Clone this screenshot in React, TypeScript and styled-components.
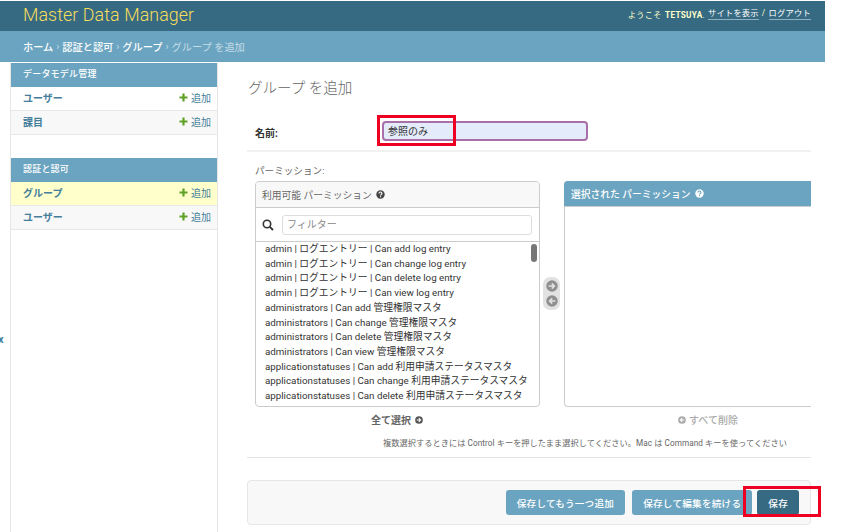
import React from "react";
import styled, { createGlobalStyle } from "styled-components";

const Global = createGlobalStyle`
  html, body { margin: 0; padding: 0; background: #fff; overflow: hidden; }
  body { width: 845px; height: 532px; font-family: Roboto, "Noto Sans CJK JP", "Liberation Sans", sans-serif; color: #333; font-size: 10px; }
  * { box-sizing: border-box; }
`;

const Page = styled.div`
  position: relative;
  width: 845px;
  height: 532px;
  padding-top: 1px;
  overflow: hidden;
`;
const Header = styled.header`
  width: 825px;
  height: 30px;
  background: #366a82;
  display: flex;
  align-items: center;
  justify-content: space-between;
  padding: 0 14px 0 23px;
`;
const Brand = styled.div`
  color: #f5dd5d;
  font-size: 17.8px;
  font-weight: 300;
  letter-spacing: 0.1px;
  margin-top: -4px;
`;
const UserTools = styled.div`
  color: #ffc;
  font-size: 8.2px;
  letter-spacing: 0.3px;
  margin-top: -4px;
  display: flex;
  gap: 3px;
  strong { font-weight: 700; margin-left: 1px; }
`;
const ToolLink = styled.span`
  color: #fff;
  border-bottom: 1px solid #8fb0bf;
  line-height: 11px;
`;
const Breadcrumbs = styled.nav`
  width: 825px;
  height: 31px;
  background: #6ba4c0;
  color: #c4dce8;
  font-size: 10.2px;
  padding: 0 23px 1px;
  display: flex;
  align-items: center;
  gap: 3px;
`;
const Crumb = styled.span`
  color: #fff;
  font-weight: 500;
`;
const Main = styled.div`
  display: flex;
  padding-left: 10px;
  margin-top: 1px;
`;
const Sidebar = styled.aside`
  width: 208px;
  height: 470px;
  flex: none;
  border-left: 1px solid #e6e6e6;
  border-right: 1px solid #e6e6e6;
`;
const ModuleGroup = styled.section`
  margin-bottom: 23px;
`;
const ModuleTitle = styled.div`
  height: 24px;
  background: #6ba4c0;
  color: #fff;
  font-size: 9px;
  font-weight: 500;
  padding: 0 0 3px 12px;
  display: flex;
  align-items: center;
  letter-spacing: 0.2px;
`;
const ModuleRow = styled.div<{ $bg?: string }>`
  height: 24px;
  background: ${(p) => p.$bg || "#fff"};
  border-bottom: 1px solid #e8e8e8;
  color: #447e9b;
  font-size: 10px;
  font-weight: 700;
  padding: 0 6px 2px 12px;
  display: flex;
  align-items: center;
  justify-content: space-between;
`;
const AddLink = styled.span`
  display: flex;
  align-items: center;
  gap: 3px;
  font-weight: 400;
  font-size: 10px;
`;
const Content = styled.main`
  flex: 1;
  padding: 16px 14px 0 29px;
`;
const Title = styled.h1`
  margin: 0 0 0 1px;
  height: 28px;
  font-size: 14.5px;
  line-height: 20px;
  font-weight: 300;
  color: #666;
`;
const NameRow = styled.div`
  margin-top: 7px;
  height: 38px;
  width: 564px;
  display: flex;
  align-items: flex-start;
  padding: 7px 0 0 8px;
  border-bottom: 2px solid #f1f1f1;
`;
const NameLabel = styled.label`
  width: 127px;
  font-size: 10px;
  font-weight: 700;
  color: #333;
  padding-top: 4px;
`;
const NameInput = styled.div`
  width: 206px;
  height: 20px;
  background: #e4ebfb;
  border: 2px solid #a86fa9;
  border-radius: 4px;
  font-size: 10px;
  display: flex;
  align-items: center;
  padding: 0 0 1px 4px;
  color: #333;
`;
const PermLabel = styled.div`
  margin: 11px 0 0 8px;
  height: 18px;
  font-size: 9.6px;
  color: #666;
`;
const Selector = styled.div`
  margin-left: 8px;
  width: 556px;
  display: flex;
  overflow: hidden;
`;
const Available = styled.div`
  width: 285px;
  height: 226px;
  flex: none;
  border: 1px solid #ccc;
  border-radius: 4px;
  overflow: hidden;
  display: flex;
  flex-direction: column;
`;
const AvailableTitle = styled.div`
  height: 26px;
  flex: none;
  background: #f8f8f8;
  border-bottom: 1px solid #ccc;
  color: #666;
  font-size: 9.75px;
  display: flex;
  align-items: center;
  gap: 4px;
  padding-left: 6px;
`;
const FilterRow = styled.div`
  height: 34px;
  flex: none;
  border-bottom: 1px solid #ccc;
  display: flex;
  align-items: center;
  padding: 0 7px 0 6px;
  gap: 8px;
`;
const FilterInput = styled.div`
  flex: 1;
  height: 20px;
  border: 1px solid #ddd;
  border-radius: 3px;
  color: #888;
  font-size: 10px;
  line-height: 17px;
  padding-left: 4px;
`;
const PermList = styled.div`
  position: relative;
  flex: 1;
  padding: 0 0 0 9px;
  overflow: hidden;
`;
const PermItem = styled.div`
  height: 14.72px;
  line-height: 14.72px;
  font-size: 9.75px;
  color: #333;
  white-space: nowrap;
`;
const ScrollThumb = styled.div`
  position: absolute;
  top: 2px;
  right: 2px;
  width: 6px;
  height: 18px;
  border-radius: 3px;
  background: #777;
`;
const ChooserColumn = styled.div`
  width: 24px;
  flex: none;
  padding: 96px 0 0 3px;
`;
const Chooser = styled.div`
  width: 17px;
  height: 33px;
  border-radius: 7px;
  background: #e2e2e2;
  display: flex;
  flex-direction: column;
  align-items: center;
  justify-content: space-evenly;
`;
const Chosen = styled.div`
  width: 260px;
  height: 226px;
  flex: none;
  border: 1px solid #ccc;
  border-right: none;
  border-radius: 4px 0 0 4px;
`;
const ChosenTitle = styled.div`
  height: 26px;
  margin: -1px -1px 0;
  background: #6ba4c0;
  color: #fff;
  border-radius: 4px 0 0 0;
  font-size: 9.75px;
  font-weight: 500;
  display: flex;
  align-items: center;
  gap: 5px;
  padding-left: 7px;
  border-bottom: 1px solid #ccc;
`;
const SelectActions = styled.div`
  margin-left: 8px;
  height: 25px;
  display: flex;
  align-items: center;
  font-size: 10px;
`;
const ChooseAll = styled.span`
  margin-left: 116px;
  width: 307px;
  font-weight: 700;
  color: #666;
  display: flex;
  align-items: center;
  gap: 4px;
`;
const RemoveAll = styled.span`
  color: #aaa;
  font-weight: 500;
  display: flex;
  align-items: center;
  gap: 3px;
`;
const HelpText = styled.div`
  width: 564px;
  height: 26px;
  padding: 4px 0 0 136px;
  font-size: 8.2px;
  color: #666;
  letter-spacing: 0.06px;
  border-bottom: 1px solid #e4e4e4;
`;
const SubmitRow = styled.div`
  margin-top: 22px;
  width: 564px;
  height: 45px;
  background: #f8f8f8;
  border: 1px solid #e6e6e6;
  border-radius: 4px;
  display: flex;
  align-items: center;
  justify-content: flex-end;
  padding: 0 11px 0 0;
`;
const SaveButton = styled.div<{ $primary?: boolean; $gap?: number }>`
  height: 25px;
  padding: 0 11px;
  background: ${(p) => (p.$primary ? "#366a82" : "#6ba4c0")};
  color: #fff;
  border-radius: 3px;
  font-size: 9.6px;
  font-weight: 500;
  display: flex;
  align-items: center;
  margin-left: ${(p) => p.$gap ?? 7}px;
  letter-spacing: 0.25px;
`;
const Toggle = styled.span`
  position: absolute;
  left: -2px;
  top: 333px;
  color: #447e9b;
  font-size: 11px;
  font-weight: 700;
`;
const Annotation = styled.div<{ $l: number; $t: number; $w: number; $h: number }>`
  position: absolute;
  left: ${(p) => p.$l}px;
  top: ${(p) => p.$t}px;
  width: ${(p) => p.$w}px;
  height: ${(p) => p.$h}px;
  border: 3px solid #ee0022;
`;

const Plus = () => (
  <svg width="9" height="9" viewBox="0 0 9 9"><path d="M3.4 0.5h2.2v2.9h2.9v2.2H5.6v2.9H3.4V5.6H.5V3.4h2.9z" fill="#5fa225" /></svg>
);
const Help = ({ fg, bg }: { fg: string; bg: string }) => (
  <svg width="9" height="9" viewBox="0 0 9 9">
    <circle cx="4.5" cy="4.5" r="4.2" fill={bg} />
    <path d="M3 3.5c0-2 3-2 3 0 0 1-1.5 1-1.5 2" fill="none" stroke={fg} strokeWidth="1.1" />
    <rect x="4" y="6.2" width="1.1" height="1.1" fill={fg} />
  </svg>
);
const Arrow = ({ dir, size, bg, fg }: { dir: "l" | "r"; size: number; bg: string; fg: string }) => (
  <svg width={size} height={size} viewBox="0 0 10 10">
    <circle cx="5" cy="5" r="4.8" fill={bg} />
    <path
      d={dir === "r" ? "M2.2 5h4.4M4.8 2.8L7 5 4.8 7.2" : "M7.8 5H3.4M5.2 2.8L3 5l2.2 2.2"}
      fill="none"
      stroke={fg}
      strokeWidth="1.3"
    />
  </svg>
);
const Search = () => (
  <svg width="12" height="12" viewBox="0 0 12 12">
    <circle cx="5" cy="5" r="3.7" fill="none" stroke="#333" strokeWidth="1.6" />
    <path d="M7.8 7.8l3.2 3.2" stroke="#333" strokeWidth="1.9" />
  </svg>
);

const perms = [
  "admin | ログエントリー | Can add log entry",
  "admin | ログエントリー | Can change log entry",
  "admin | ログエントリー | Can delete log entry",
  "admin | ログエントリー | Can view log entry",
  "administrators | Can add 管理権限マスタ",
  "administrators | Can change 管理権限マスタ",
  "administrators | Can delete 管理権限マスタ",
  "administrators | Can view 管理権限マスタ",
  "applicationstatuses | Can add 利用申請ステータスマスタ",
  "applicationstatuses | Can change 利用申請ステータスマスタ",
  "applicationstatuses | Can delete 利用申請ステータスマスタ",
];

const Row = ({ name, bg }: { name: string; bg?: string }) => (
  <ModuleRow $bg={bg}>
    <span>{name}</span>
    <AddLink><Plus />追加</AddLink>
  </ModuleRow>
);

export default function App() {
  return (
    <Page>
      <Global />
      <Header>
        <Brand>Master Data Manager</Brand>
        <UserTools>
          <span>ようこそ <strong>TETSUYA</strong>.</span>
          <ToolLink>サイトを表示</ToolLink>
          <span>/</span>
          <ToolLink>ログアウト</ToolLink>
        </UserTools>
      </Header>
      <Breadcrumbs>
        <Crumb>ホーム</Crumb>›<Crumb>認証と認可</Crumb>›<Crumb>グループ</Crumb>›<span>グループ を追加</span>
      </Breadcrumbs>
      <Main>
        <Sidebar>
          <ModuleGroup>
            <ModuleTitle>データモデル管理</ModuleTitle>
            <Row name="ユーザー" />
            <Row name="課目" bg="#f8f8f8" />
          </ModuleGroup>
          <ModuleGroup>
            <ModuleTitle>認証と認可</ModuleTitle>
            <Row name="グループ" bg="#ffffcc" />
            <Row name="ユーザー" bg="#f8f8f8" />
          </ModuleGroup>
        </Sidebar>
        <Content>
          <Title>グループ を追加</Title>
          <NameRow>
            <NameLabel>名前:</NameLabel>
            <NameInput>参照のみ</NameInput>
          </NameRow>
          <PermLabel>パーミッション:</PermLabel>
          <Selector>
            <Available>
              <AvailableTitle>利用可能 パーミッション <Help fg="#fff" bg="#444" /></AvailableTitle>
              <FilterRow>
                <Search />
                <FilterInput>フィルター</FilterInput>
              </FilterRow>
              <PermList>
                {perms.map((p) => <PermItem key={p}>{p}</PermItem>)}
                <ScrollThumb />
              </PermList>
            </Available>
            <ChooserColumn>
              <Chooser>
                <Arrow dir="r" size={12} bg="#8f8f8f" fg="#e2e2e2" />
                <Arrow dir="l" size={12} bg="#8f8f8f" fg="#e2e2e2" />
              </Chooser>
            </ChooserColumn>
            <Chosen>
              <ChosenTitle>選択された パーミッション <Help fg="#6ba4c0" bg="#fff" /></ChosenTitle>
            </Chosen>
          </Selector>
          <SelectActions>
            <ChooseAll>全て選択 <Arrow dir="r" size={8} bg="#555" fg="#fff" /></ChooseAll>
            <RemoveAll><Arrow dir="l" size={8} bg="#aaa" fg="#fff" /> すべて削除</RemoveAll>
          </SelectActions>
          <HelpText>複数選択するときには Control キーを押したまま選択してください。Mac は Command キーを使ってください</HelpText>
          <SubmitRow>
            <SaveButton>保存してもう一つ追加</SaveButton>
            <SaveButton>保存して編集を続ける</SaveButton>
            <SaveButton $primary $gap={5}>保存</SaveButton>
          </SubmitRow>
        </Content>
      </Main>
      <Toggle>x</Toggle>
      <Annotation $l={377} $t={115} $w={79} $h={31} />
      <Annotation $l={743} $t={486} $w={78} $h={31} />
    </Page>
  );
}
